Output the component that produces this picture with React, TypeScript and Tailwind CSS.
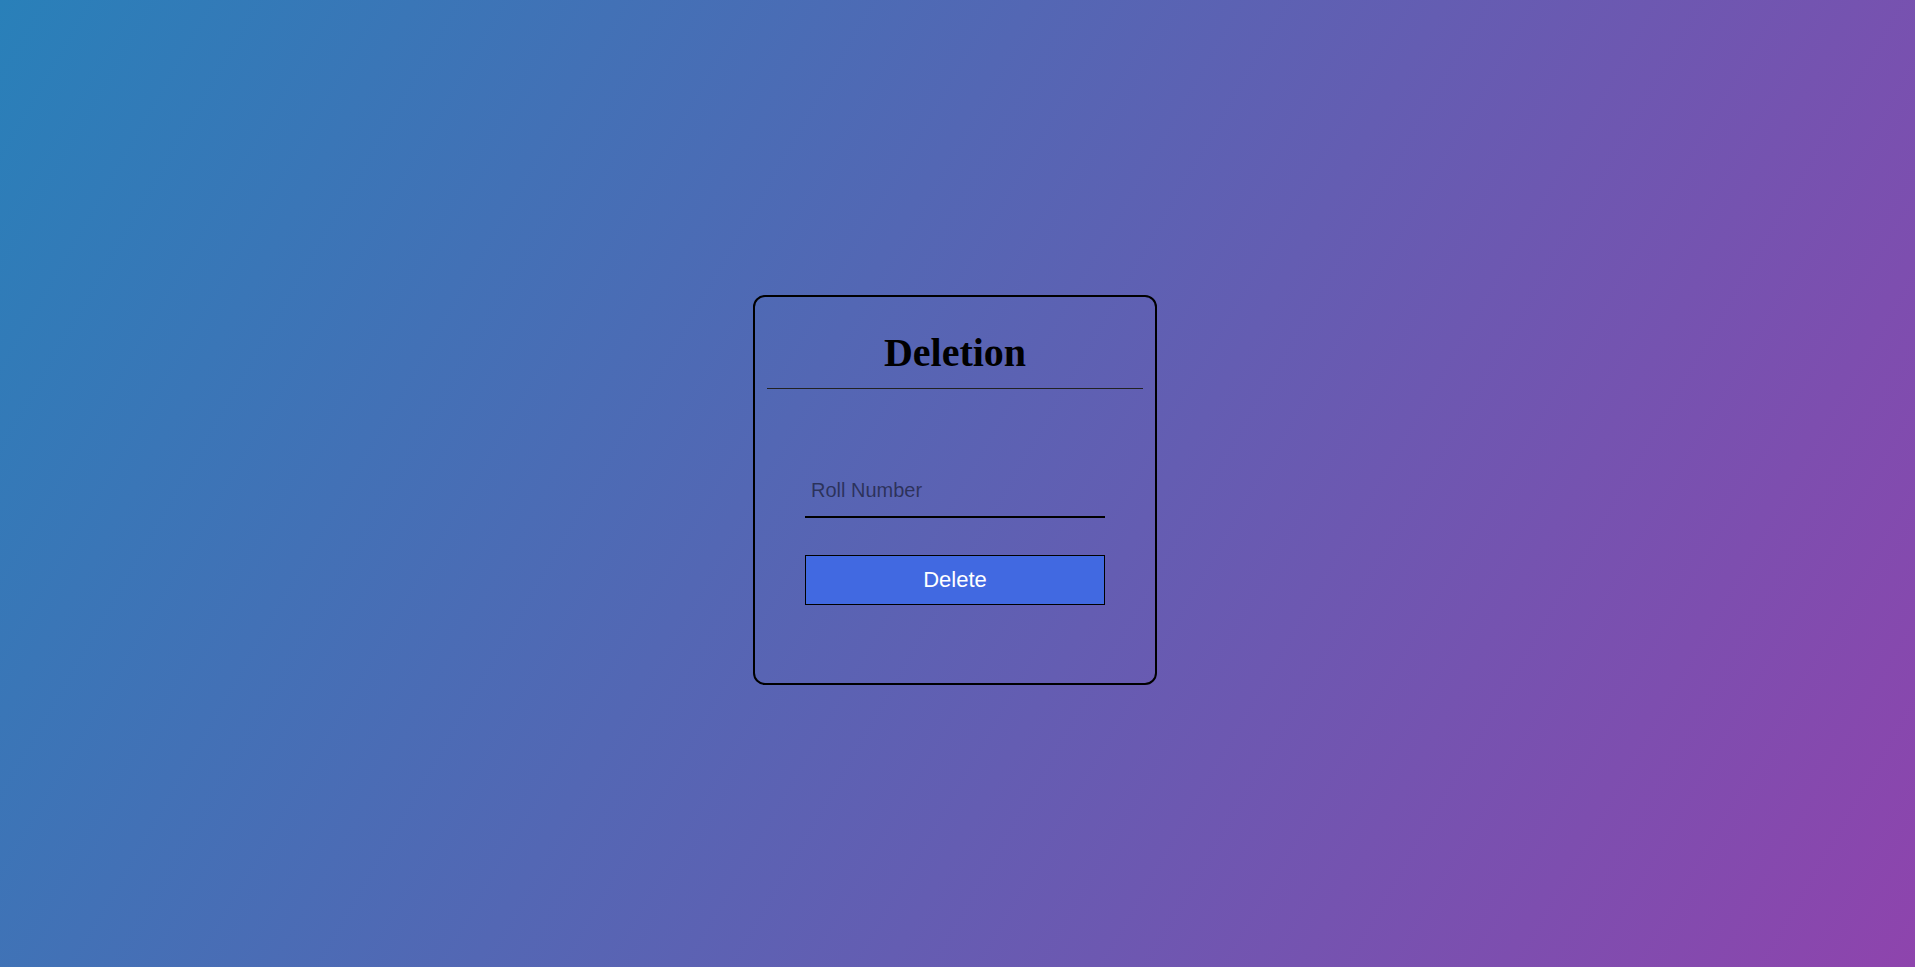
export default function App() {
  return (
    <div className="h-screen w-full pt-3 flex items-center justify-center bg-[linear-gradient(120deg,#2980b9,#8e44ad)] font-['Liberation_Sans',Arial,sans-serif]">
      <div className="w-[404px] h-[390px] mr-[5px] border-2 border-black rounded-xl px-3 pt-[32px]">
        <h1 className="text-center font-['Liberation_Serif','Times_New_Roman',serif] font-bold text-[40px] leading-[48px] text-black">
          Deletion
        </h1>
        <hr className="mt-[11px] border-t border-[#222]" />
        <form className="mx-auto w-[300px] mt-[82px]" onSubmit={(e) => e.preventDefault()}>
          <input
            type="text"
            placeholder="Roll Number"
            className="block w-full bg-transparent outline-none border-b-2 border-black pl-[6px] pt-[8px] pb-[14px] text-[20px] leading-[23px] text-black placeholder:text-black/50"
          />
          <button
            type="submit"
            className="block w-full h-[50px] mt-[37px] bg-[#4169e1] border border-black text-white text-[22px] leading-none"
          >
            Delete
          </button>
        </form>
      </div>
    </div>
  )
}
